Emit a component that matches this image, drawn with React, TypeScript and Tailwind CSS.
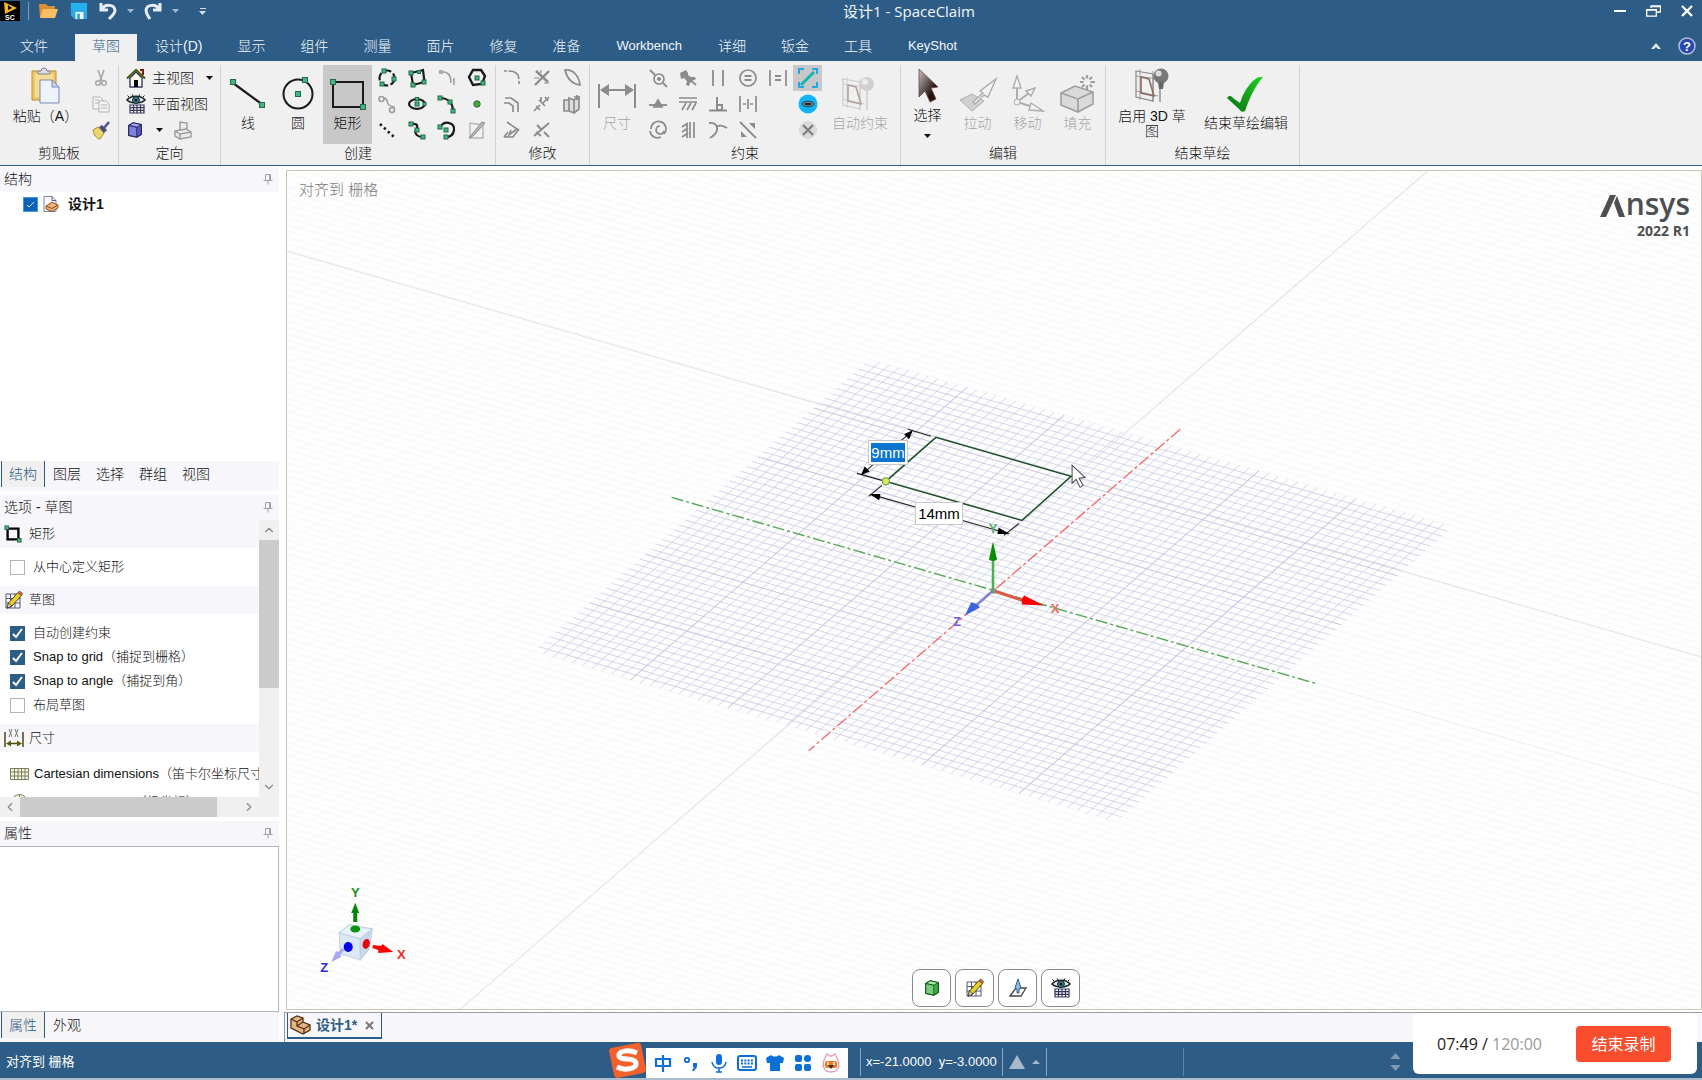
import type { ReactNode } from 'react';
import { ChevronDown, ChevronLeft, ChevronRight, ChevronUp } from 'lucide-react';

const GREY = '#8c8c8c';
const INK = '#1a1a1a';

function Ico({ children, size = 20, box = 20 }: { children: ReactNode; size?: number; box?: number }) {
  return (
    <svg width={size} height={size} viewBox={`0 0 ${box} ${box}`} fill="none" className="shrink-0" aria-hidden="true">
      {children}
    </svg>
  );
}

function Node({ x, y, s = 4 }: { x: number; y: number; s?: number }) {
  return <rect x={x - s / 2} y={y - s / 2} width={s} height={s} fill="#46b583" stroke="#1e6b47" strokeWidth="1" />;
}

function Caret({ className = '' }: { className?: string }) {
  return (
    <svg width="7" height="4" viewBox="0 0 7 4" className={className} aria-hidden="true">
      <path d="M0 0h7L3.5 4z" fill="currentColor" />
    </svg>
  );
}

function Pin() {
  return (
    <svg width="10" height="12" viewBox="0 0 10 12" fill="none" stroke="#a0a0a8" aria-hidden="true">
      <path d="M2.5 7V1.5h5V7M6.5 1.5V7M.5 7.5h9M5 8v3.5" />
    </svg>
  );
}

const cubeIcon = (light: string, mid: string, dark: string) => (
  <Ico size={18}>
    <path d="M3 5l5-3 9 2v11l-5 3-9-2z" fill={mid} stroke={dark} strokeWidth="1.4" strokeLinejoin="round" />
    <path d="M3 5l9 2 5-3-9-2z" fill={light} stroke={dark} strokeWidth="1" />
    <path d="M3 5l9 2v11l-9-2z" fill={light} fillOpacity=".55" stroke={dark} strokeWidth="1" />
  </Ico>
);

const eyeGrid = (
  <Ico size={20}>
    <path d="M1 6c4-5 14-5 18 0-4 4-14 4-18 0z" fill="#dfe8e8" stroke="#222" strokeWidth="1.6" />
    <circle cx="10" cy="6" r="3.4" fill="#3a7f8c" stroke="#123" />
    <circle cx="10" cy="6" r="1.3" fill="#000" />
    <path d="M3 3L1.5 1.5M7 2L6 .3M13 2l1-1.7M17 3l1.5-1.5" stroke="#222" />
    <path d="M4 11h14v8H4z" fill="#fff" stroke="#34345e" strokeWidth="1.2" />
    <path d="M4 13.7h14M4 16.3h14M7.5 11v8M11 11v8M14.5 11v8" stroke="#34345e" strokeWidth="1.2" />
  </Ico>
);

const pencilGrid = (
  <Ico size={20}>
    <path d="M2 4h14v14H2zM2 8.5h14M2 13h14M6.5 4v14M11 4v14" stroke="#55557c" />
    <path d="M3 18l1.5-5L14 2.5l3.5 3L8 16z" fill="#e6d02c" stroke="#55500c" />
    <path d="M14 2.5L15.5 1l3 2.5-1 2z" fill="#d9705e" stroke="#7c3a30" strokeWidth=".8" />
    <path d="M3 18l1.5-5L8 16z" fill="#f3dfae" stroke="#333" strokeWidth=".8" />
  </Ico>
);

const rectSmall = (
  <Ico size={18}>
    <path d="M4 4h12v12H4z" stroke="#000" strokeWidth="2.6" />
    <Node x={3} y={3} />
    <Node x={17} y={17} />
  </Ico>
);

const createIcons: [string, ReactNode][] = [
  ['三点圆', <><circle cx="10" cy="10" r="7.5" stroke={INK} strokeWidth="2.2" strokeDasharray="8 2.5" /><Node x={7} y={3} /><Node x={17} y={11} /><Node x={5} y={16} /></>],
  ['切线', <><circle cx="4.5" cy="5" r="2.5" stroke="#9a9a9a" strokeWidth="1.5" /><circle cx="15" cy="16" r="2.5" stroke="#9a9a9a" strokeWidth="1.5" /><path d="M7 4c5 1 2 5 5 7s5 1 5.5 3" stroke="#9a9a9a" strokeWidth="1.5" /></>],
  ['构造线', <path d="M3 4l14 13" stroke={INK} strokeWidth="2.6" strokeDasharray="2.4 3" />],
  ['三点矩形', <><path d="M4 5l12-3 1.5 12L6 17z" stroke={INK} strokeWidth="2.2" /><Node x={4} y={5} /><Node x={17} y={14} /><Node x={6} y={17} /><Node x={12} y={4} s={3} /></>],
  ['椭圆', <><ellipse cx="10" cy="10" rx="8" ry="4.8" stroke={INK} strokeWidth="2.2" /><Node x={10} y={10} /><Node x={10} y={5} s={3} /><Node x={17.5} y={10} s={3} /></>],
  ['样条曲线', <><path d="M4 4c5-1 7 1 6 4s-3 3-1 6 4 3 7 3" stroke={INK} strokeWidth="2.2" /><Node x={4} y={4} /><Node x={10} y={10} /><Node x={16} y={17} /></>],
  ['相切弧', <><path d="M3 4c8-1 11 3 11 11M17 10v7" stroke="#9a9a9a" strokeWidth="1.5" /><rect x="2" y="2" width="4" height="4" fill="#aaa" /></>],
  ['扫掠弧', <><path d="M3 4c8 0 13 5 13 13" stroke={INK} strokeWidth="2.2" /><Node x={3} y={4} /><Node x={13} y={8} /><Node x={16} y={17} /></>],
  ['三点弧', <><path d="M4 6c4-6 14-3 13 4-.5 4-3 7-8 7" stroke={INK} strokeWidth="2.2" /><Node x={3} y={7} /><Node x={9} y={10} /><Node x={9} y={17} /></>],
  ['多边形', <><path d="M6 2h8l4 6-3 8-9 1-4-8z" stroke={INK} strokeWidth="2.4" /><Node x={10} y={10} /><Node x={16} y={15} /></>],
  ['点', <circle cx="10" cy="10" r="3.2" fill="#45a945" stroke="#256d25" />],
  ['面曲线', <><path d="M3 3v15h13V5z" stroke="#b5b5b5" strokeWidth="1.4" /><path d="M2 18L15 2l3 1L6 16z" fill="#b8b8b8" stroke="#8c8c8c" /></>],
];

const modifyIcons: [string, ReactNode][] = [
  ['创建圆角', <path d="M2 3h5c7 0 10 3 10 9v5" strokeDasharray="3 1.5 15 2" />],
  ['偏移曲线', <path d="M3 4h6l7 5v9M2 9h5l4 3v6" />],
  ['投影到草图', <path d="M2 17h9l6-8M2 17l4-5M5 2l10 7-8 6 2-5" />],
  ['剪裁', <><path d="M4 3l12 11M17 3L3 17" strokeWidth="2.4" /><path d="M2 10h5M9 2v3M12 15h5" strokeWidth="1.2" /></>],
  ['拆分曲线', <path d="M2 17l6-6M11 9l6-6M7 6l6 6M4 12l4 4M13 3l3 4M9 3v4" />],
  ['创建角', <path d="M2 16L17 3M5 5l5 5M12 12l5 5M4 12l5 4" strokeWidth="2" />],
  ['弯曲', <path d="M3 2c8-1 14 6 15 15C10 16 5 10 3 2z" />],
  ['缩放', <path d="M2 6h5v11H2zM7 4l5 2v13l-5-2zM12 6l5-3v12l-5 4M15 1v5M12 3h6" fill="#ddd" />],
];

const constraintIcons: [string, ReactNode][] = [
  ['检查', <><circle cx="11" cy="11" r="5" /><path d="M15 15l4 4M9 11h4M11 9v4M2 2l5 5" strokeWidth="1.9" /></>],
  ['中点', <><path d="M1 11h18" strokeWidth="1.9" /><path d="M10 6l4 7H6z" fill={GREY} /></>],
  ['同心', <path d="M3 9a7.5 7.5 0 1113 5M12 6a4 4 0 104 5M2 11c1 6 6 8 11 6" />],
  ['固定', <><path d="M2 5l6-3 2 3v2l3 2h4l1 2-4 2-2 2-1 3-3-1 1-4-3-3-3 1z" fill={GREY} stroke="none" /><path d="M11 11l7 6" strokeWidth="2" /></>],
  ['水平', <path d="M1 4h18M1 8h18M4 16l4-7M9 16l4-7M14 16l4-7" />],
  ['竖直', <path d="M12 2v16M16 2v16M4 7l6-4M4 12l6-4M4 17l6-4M9 3v15" />],
  ['平行', <path d="M5 2v16M15 2v16" strokeWidth="1.8" />],
  ['垂直', <><path d="M1 16.5h18" strokeWidth="2" /><path d="M9 3v13h5v-5H9z" strokeWidth="2" /></>],
  ['相切', <path d="M1 3c6-1 9 3 8 7-1 5-4 6-7 8M8 7c4-2 6-2 11 1" strokeWidth="1.8" />],
  ['等半径', <><circle cx="10" cy="10" r="8" /><path d="M6.5 8h7M6.5 12h7" strokeWidth="2" /></>],
  ['等距', <path d="M2 2v16M18 2v16M10 5v10M5 10h3M12 10h3" />],
  ['对称', <><path d="M2 2l16 16" strokeWidth="1.8" /><path d="M11 3h6v6zM3 11v6h6z" fill={GREY} stroke="none" /></>],
  ['等长', <><path d="M2 2v16M18 2v16" /><path d="M7 8h6M7 12h6" strokeWidth="2" /></>],
];

function IconGrid({ items, stroke }: { items: [string, ReactNode][]; stroke?: string }) {
  return (
    <div className="grid auto-cols-[30px] grid-flow-col grid-rows-[repeat(3,26px)]">
      {items.map(([name, art]) => (
        <button key={name} aria-label={name} className="flex items-center justify-center">
          <Ico><g stroke={stroke} strokeWidth={stroke ? 1.7 : undefined}>{art}</g></Ico>
        </button>
      ))}
    </div>
  );
}

function Group({ title, className, children }: { title: string; className: string; children: ReactNode }) {
  return (
    <section aria-label={title} className={`flex shrink-0 flex-col border-r border-[#d2d2d2] ${className}`}>
      <div className="flex h-[79px] justify-center pr-px">{children}</div>
      <div className="text-center leading-[18px]">{title}</div>
    </section>
  );
}

// large ribbon button: icon on top, caption below
function Big({ label, icon, className = '', disabled = false }: { label: string; icon: ReactNode; className?: string; disabled?: boolean }) {
  return (
    <button className={`flex shrink-0 flex-col items-center whitespace-nowrap pt-2 leading-4 ${disabled ? 'text-[#a6a6a6]' : ''} ${className}`}>
      <span className="flex h-[42px] items-center">{icon}</span>
      {label}
    </button>
  );
}

const tabs = ['设计(D)', '显示', '组件', '测量', '面片', '修复', '准备', 'Workbench', '详细', '钣金', '工具', 'KeyShot'];

function TitleBar() {
  return (
    <header className="bg-[#2d5c87] text-[#f2f6fa]">
      <div className="flex h-[22px] items-center">
        <div className="flex w-[208px] shrink-0 items-center">
          <svg width="20" height="20" viewBox="0 0 20 20" aria-hidden="true">
            <path d="M0 0h20v20H0z" fill="#000" />
            <path d="M4 1l13 6-12 6z" fill="#f4b323" />
            <path d="M8 4l4 3-4 2z" fill="#000" />
            <text x="5" y="19" fontSize="7" fontWeight="700" fill="#fff">SC</text>
          </svg>
          <span className="mx-2 h-[18px] w-px bg-[#7f9dba]" />
          <button aria-label="打开" className="ml-px">
            <Ico size={20}>
              <path d="M1 3h7l2 2h7v12H2z" fill="#d98f35" />
              <path d="M5 8h15l-3 9H2z" fill="#fbbd62" />
            </Ico>
          </button>
          <button aria-label="保存" className="ml-3">
            <Ico size={18}>
              <path d="M1 1h18v18H5l-4-4z" fill="#2da5e6" />
              <path d="M1 1h18v8H1z" fill="#25b0ee" />
              <path d="M6 11h9v8H6z" fill="#e8f6fd" />
              <path d="M8 13h3v6H8z" fill="#2da5e6" />
            </Ico>
          </button>
          <button aria-label="撤消" className="ml-[10px]">
            <Ico size={20}><path d="M3 2v7h7M4 8c3-5 12-5 13 1 0 4-3 6-6 9" stroke="#e6edf4" strokeWidth="3" /></Ico>
          </button>
          <Caret className="ml-[9px] text-[#a3b8cc]" />
          <button aria-label="恢复" className="ml-[9px]">
            <Ico size={20}><path d="M17 2v7h-7M16 8C13 3 4 3 3 9c0 4 2 6 4 9" stroke="#e6edf4" strokeWidth="3" /></Ico>
          </button>
          <Caret className="ml-[9px] text-[#a3b8cc]" />
          <span className="ml-5 flex flex-col items-center gap-[2px] text-[#d5e0ea]">
            <span className="h-px w-[6px] bg-current" />
            <Caret />
          </span>
        </div>
        <h1 className="flex-1 text-center font-['Open_Sans','Noto_Sans_CJK_SC',sans-serif] text-[15px] font-normal leading-[22px]">设计1 - SpaceClaim</h1>
        <div className="flex w-[92px] shrink-0 items-center justify-between pl-1 pr-[9px]">
          <button aria-label="最小化">
            <svg width="12" height="12" viewBox="0 0 12 12"><path d="M0 6h12" stroke="#fff" strokeWidth="2" /></svg>
          </button>
          <button aria-label="还原">
            <svg width="15" height="12" viewBox="0 0 15 12" fill="none" stroke="#fff">
              <path d="M5 3V1h9.5v6H11M4.5 1.5h10" strokeWidth="1.3" />
              <path d="M.7 4.7h9.6v6.5H.7zM.7 5.2h9.6" strokeWidth="1.3" />
            </svg>
          </button>
          <button aria-label="关闭">
            <svg width="12" height="12" viewBox="0 0 12 12"><path d="M1 1l10 10M11 1L1 11" stroke="#fff" strokeWidth="2.4" /></svg>
          </button>
        </div>
      </div>
      <nav className="mt-3 flex h-[27px] items-stretch gap-px pl-[3px]">
        <button className="mr-[9px] px-[17px] pb-1 text-sm leading-5">文件</button>
        <button className="bg-[#f0f0f0] px-[17px] pb-1 text-sm leading-5 text-[#2d5c87]">草图</button>
        {tabs.map(t => (
          <button key={t} className={`pb-1 leading-5 ${/^[A-Z]/.test(t) ? 'px-[18px] pt-px text-[13px]' : 'px-[17px] text-sm'}`}>{t}</button>
        ))}
        <div className="ml-auto flex items-center gap-[17px] pb-1 pr-[6px]">
          <button aria-label="折叠功能区">
            <svg width="10" height="6" viewBox="0 0 10 6"><path d="M5 0l5 6H7L5 4 3 6H0z" fill="#e6edf4" /></svg>
          </button>
          <button aria-label="帮助">
            <svg width="18" height="18" viewBox="0 0 18 18">
              <circle cx="9" cy="9" r="8" fill="#2b49b4" stroke="#b5bfd8" strokeWidth="1.5" />
              <text x="9" y="14" fontSize="13" fontWeight="700" fill="#fff" textAnchor="middle">?</text>
            </svg>
          </button>
        </div>
      </nav>
    </header>
  );
}

const lampArt = (
  <>
    <path d="M3 5l17 3v27L3 31z" stroke="currentColor" strokeWidth="1.2" />
    <path d="M3 10l22 3M3 25l22 5M7 3v31M20 5v31" stroke="currentColor" strokeWidth=".8" />
    <path d="M8 11l8 2 5 17-13-3z" stroke="#8a6f63" strokeWidth="1.6" />
    <path d="M27 16v20" stroke="currentColor" strokeWidth="1.4" />
  </>
);

function Ribbon() {
  return (
    <div className="flex h-[105px] items-stretch overflow-hidden border-b border-[#2d5c87] bg-[#f0f0f0] pt-1 text-sm">
      <Group title="剪贴板" className="w-[119px]">
        <button className="flex w-[90px] flex-col items-center whitespace-nowrap pt-px leading-5">
          <svg width="32" height="40" viewBox="0 0 32 40" aria-hidden="true">
            <path d="M2 5h24v29H2z" fill="#eec868" stroke="#b98c34" />
            <path d="M5 8h18v23H5z" fill="#f7dc94" />
            <path d="M8 8V5h3a3 3 0 016 0h3v3z" fill="#dadde2" stroke="#7e8590" />
            <path d="M10 14h12l7 7v16H10z" fill="#eef2fb" stroke="#7889b5" />
            <path d="M22 14v7h7z" fill="#c9d4ee" stroke="#7889b5" />
          </svg>
          粘贴（A）
        </button>
        <div className="mr-[6px] grid grid-rows-[repeat(3,26px)]">
          <button aria-label="剪切"><Ico><path d="M7 2l4 11M13 2L9 13" stroke="#a9a9a9" strokeWidth="1.6" /><circle cx="7" cy="15" r="2.3" stroke="#a9a9a9" strokeWidth="1.5" /><circle cx="13" cy="15" r="2.3" stroke="#a9a9a9" strokeWidth="1.5" /></Ico></button>
          <button aria-label="复制"><Ico><path d="M2 3h7l3 3v9H2z" fill="#f4f4f4" stroke="#b3b3b3" /><path d="M8 7h7l3 3v8H8zM10 11h6M10 14h6M4 6h4M4 9h4" fill="#f4f4f4" stroke="#b3b3b3" /></Ico></button>
          <button aria-label="格式刷"><Ico><path d="M2 10l5-3 6 6-4 6c-3 0-6-4-7-9z" fill="#ecd674" stroke="#a98d2a" /><path d="M8 7l3-2 5 5-3 3z" fill="#4b4b78" /><path d="M13 8l5-6" stroke="#55559a" strokeWidth="2.6" /></Ico></button>
        </div>
      </Group>

      <Group title="定向" className="w-[102px]">
        <div className="grid w-full grid-rows-[repeat(3,26px)] pl-[7px]">
          <button className="flex items-center gap-[6px] pb-px leading-5">
            <Ico size={20}>
              <path d="M4 10v9h12v-9l-6-6z" fill="#fdfae8" stroke="#36366e" strokeWidth="1.4" />
              <path d="M1 10.5L10 2l9 8.5" stroke="#4c5a10" strokeWidth="2.2" />
              <path d="M14 2h3v5" stroke="#7d1d12" strokeWidth="2" />
              <path d="M8 12h4v7H8z" fill="#000" />
            </Ico>
            主视图
            <Caret className="ml-[6px]" />
          </button>
          <button className="flex items-center gap-[6px] pb-px leading-5">{eyeGrid}平面视图</button>
          <div className="flex items-center">
            <button aria-label="旋转视图" className="flex items-center gap-3">{cubeIcon('#a4a4f0', '#5a5ac4', '#23235f')}<Caret /></button>
            <button aria-label="打印视图" className="ml-[10px]">
              <Ico><path d="M7 10V2l7 1v6M2 11l11-2 5 3v5l-11 2-5-3zM2 11l5 3 11-2M7 14v5" stroke="#9c9c9c" strokeWidth="1.4" fill="#ececec" /></Ico>
            </button>
          </div>
        </div>
      </Group>

      <Group title="创建" className="w-[275px]">
        <Big label="线" className="w-[50px]" icon={
          <Ico size={40} box={40}><path d="M5 9l30 22" stroke={INK} strokeWidth="2.2" /><Node x={5} y={8} s={5} /><Node x={34} y={31} s={5} /></Ico>} />
        <Big label="圆" className="w-[50px]" icon={
          <Ico size={36} box={36}><circle cx="18" cy="18" r="14.5" stroke={INK} strokeWidth="2" /><Node x={18} y={18} s={5} /><Node x={25} y={4} s={5} /></Ico>} />
        <Big label="矩形" className="w-[49px] bg-[#c8c8c8]" icon={
          <Ico size={40} box={40}><path d="M5 8h30v25H5z" stroke={INK} strokeWidth="2" /><Node x={5} y={8} s={5} /><Node x={35} y={33} s={5} /></Ico>} />
        <IconGrid items={createIcons} />
      </Group>

      <Group title="修改" className="w-[94px]">
        <IconGrid items={modifyIcons} stroke="#8c8c8c" />
      </Group>

      <Group title="约束" className="w-[311px]">
        <Big disabled label="尺寸" className="w-[52px]" icon={
          <Ico size={40} box={40}><path d="M2 10v24M38 10v24M6 16h28" stroke={GREY} strokeWidth="2" /><path d="M3 16l9-6v12zM37 16l-9-6v12z" fill={GREY} /></Ico>} />
        <IconGrid items={constraintIcons} stroke="#8c8c8c" />
        <div className="grid grid-rows-[repeat(3,26px)] justify-items-center">
          <button aria-label="草图约束" className="flex w-[29px] items-center justify-center bg-[#c8c8c8]">
            <Ico size={22} box={22}><path d="M2 7V2h5M15 2h5v5M20 15v5h-5M7 20H2v-5" stroke="#1fa9e0" strokeWidth="2" /><path d="M4 18L17 5" stroke="#11b6b2" strokeWidth="3" /></Ico>
          </button>
          <button aria-label="显示约束"><Ico><circle cx="10" cy="10" r="9.5" fill="#12b5f5" /><ellipse cx="10" cy="10" rx="6" ry="2.8" fill="#5f7c89" stroke="#2c4957" /><path d="M7 10h6" stroke="#1f2d33" strokeWidth="2" /></Ico></button>
          <button aria-label="删除约束"><Ico><circle cx="10" cy="10" r="9" fill="#d9d9d9" /><path d="M5 5l10 10M15 5L5 15" stroke="#7d7d7d" strokeWidth="2.2" /></Ico></button>
        </div>
        <Big disabled label="自动约束" className="w-[76px]" icon={
          <Ico size={40} box={40}><g className="text-[#b4b4b4]" opacity=".6">{lampArt}</g><circle cx="27" cy="10" r="7" fill="#d0d0d0" /><circle cx="25" cy="8" r="3" fill="#ececec" /></Ico>} />
      </Group>

      <Group title="编辑" className="w-[205px]">
        <button className="flex w-[50px] flex-col items-center leading-5">
          <svg width="26" height="40" viewBox="0 0 26 40" aria-hidden="true">
            <defs>
              <linearGradient id="arrow" x1="0" y1="0" x2="1" y2="1"><stop offset="0" stopColor="#c9c4c2" /><stop offset=".7" stopColor="#231410" /></linearGradient>
            </defs>
            <path d="M4 4l19 18-7 1 5 11-6 3-5-11-6 6z" fill="url(#arrow)" stroke="#6b4a3c" strokeWidth=".8" />
          </svg>
          选择
          <Caret className="mt-[9px]" />
        </button>
        <Big disabled label="拉动" className="w-[50px]" icon={
          <Ico size={40} box={40}><path d="M2 26l12-6 12 7-12 10z" fill="#d0d0d0" stroke="#adadad" /><path d="M17 30l9-9 4 2L38 5 22 17l3 2-10 9z" fill="#f3f3f3" stroke="#adadad" strokeWidth="1.4" /></Ico>} />
        <Big disabled label="移动" className="w-[50px]" icon={
          <Ico size={40} box={40}><path d="M9 28V12M9 28l12-9M9 28l16 5" stroke="#adadad" strokeWidth="2" /><path d="M5 14L9 2l4 12zM18 17l9-3-4 8zM23 29l12 8-14-1z" fill="#f3f3f3" stroke="#adadad" strokeWidth="1.4" /><circle cx="9" cy="28" r="3" fill="#eee" stroke="#adadad" /></Ico>} />
        <Big disabled label="填充" className="w-[50px]" icon={
          <Ico size={40} box={40}><path d="M3 19l14-7 18 6v12l-15 8-17-7z" fill="#dadada" stroke="#9e9e9e" strokeWidth="1.6" /><path d="M3 19l17 6 15-7M20 25v13" stroke="#9e9e9e" strokeWidth="1.6" /><path d="M29 1v15M22 8h15M24 3l10 10M34 3L24 13" stroke="#9e9e9e" strokeWidth="2.2" /><circle cx="29" cy="8" r="3.5" fill="#f0f0f0" /></Ico>} />
      </Group>

      <Group title="结束草绘" className="w-[194px]">
        <button className="flex w-[88px] flex-col items-center px-2 leading-[15px]">
          <span className="mb-1 flex h-[40px] items-center text-[#8a8a8a]">
            <Ico size={38} box={38}>
              {lampArt}
              <circle cx="28" cy="10" r="7.5" fill="#777" />
              <circle cx="25.5" cy="7.5" r="3" fill="#ddd" />
              <path d="M25 16h6l-1 7h-4z" fill="#666" />
            </Ico>
          </span>
          启用 3D 草图
        </button>
        <Big label="结束草绘编辑" className="w-[100px]" icon={
          <Ico size={40} box={40}>
            <defs>
              <linearGradient id="tick" x1="0" y1="1" x2="1" y2="0"><stop offset="0" stopColor="#0b6e18" /><stop offset="1" stopColor="#1fd31f" /></linearGradient>
            </defs>
            <path d="M1 24c2-3 5-2 6 0l7 5C18 17 25 6 33 3h4C29 12 23 25 19 37c-2 1-4 1-5-1z" fill="url(#tick)" />
          </Ico>} />
      </Group>
    </div>
  );
}

function PanelHead({ title }: { title: string }) {
  return (
    <div className="flex h-[25px] shrink-0 items-center justify-between bg-[#f7f7fb] pb-[2px] pl-1 pr-[6px] text-sm leading-5">
      <h2>{title}</h2>
      <button aria-label={`固定${title}`}><Pin /></button>
    </div>
  );
}

function PanelTabs({ items }: { items: string[] }) {
  return (
    <div className="flex h-[30px] shrink-0 items-start bg-[#f7f7fb] pl-px text-sm">
      {items.map((t, i) => (
        <button key={t} className={`h-[26px] pb-px ${i === 0 ? 'border-x border-[#2d5c87] bg-[#f0f0f0] px-[7px] text-[#2d5c87]' : 'pl-2 pr-[7px]'}`}>{t}</button>
      ))}
    </div>
  );
}

function OptionHead({ icon, title }: { icon: ReactNode; title: string }) {
  return (
    <h3 className="flex h-7 shrink-0 items-center bg-[#f7f7fb] pl-1">
      <span className="flex w-[25px]">{icon}</span>
      {title}
    </h3>
  );
}

function Check({ label, checked = false }: { label: string; checked?: boolean }) {
  return (
    <label className="flex h-6 items-center gap-2 pl-[10px] whitespace-nowrap">
      <span className="relative flex">
        <input type="checkbox" defaultChecked={checked} className="peer h-[15px] w-[15px] appearance-none border border-[#b4b4b4] bg-white checked:border-[#2d5c87] checked:bg-[#2d5c87]" />
        <svg width="15" height="15" viewBox="0 0 15 15" fill="none" className="pointer-events-none absolute inset-0 hidden peer-checked:block">
          <path d="M3 8l3 3 6-8" stroke="#fff" strokeWidth="2" />
        </svg>
      </span>
      {label}
    </label>
  );
}

function Sidebar() {
  return (
    <aside className="flex w-[279px] shrink-0 flex-col pt-px">
      <PanelHead title="结构" />
      <div className="min-h-[120px] flex-1">
        <label className="flex h-6 items-center pl-[23px] text-sm font-bold">
          <span className="relative flex">
            <input type="checkbox" defaultChecked className="h-[15px] w-[15px] appearance-none border border-[#4c97d8] bg-[#0a63b8]" />
            <svg width="15" height="15" viewBox="0 0 15 15" fill="none" className="pointer-events-none absolute inset-0"><path d="M4 8l2 2 5-5" stroke="#d6e8f8" /></svg>
          </span>
          <span className="ml-[5px] mr-[9px]">
            <Ico size={16} box={16}>
              <path d="M1 .5h8l4 4v11H1z" fill="#fff" stroke="#7684a6" />
              <path d="M9 .5v4h4" stroke="#4c5f94" />
              <path d="M3 10l6-4 6 3v3l-6 3.5-6-2.5z" fill="#e9b27c" stroke="#8d5527" />
              <path d="M3 10l6 2.5L15 9" stroke="#8d5527" />
            </Ico>
          </span>
          设计1
        </label>
      </div>
      <PanelTabs items={['结构', '图层', '选择', '群组', '视图']} />

      <div className="mt-1 flex flex-col">
        <PanelHead title="选项 - 草图" />
        <div className="flex text-[13px]">
          <div className="flex h-[277px] min-w-0 flex-1 flex-col overflow-hidden">
            <OptionHead icon={rectSmall} title="矩形" />
            <div className="flex h-[38px] shrink-0 flex-col justify-center"><Check label="从中心定义矩形" /></div>
            <OptionHead icon={pencilGrid} title="草图" />
            <div className="shrink-0 py-[7px]">
              <Check checked label="自动创建约束" />
              <Check checked label="Snap to grid（捕捉到栅格）" />
              <Check checked label="Snap to angle（捕捉到角）" />
              <Check label="布局草图" />
            </div>
            <OptionHead title="尺寸" icon={
              <Ico size={20}>
                <path d="M1 4v15M19 4v15M4 15.5h12" stroke="#4a4a10" strokeWidth="1.5" />
                <path d="M2 15.5l5-3v6zM18 15.5l-5-3v6z" fill="#5c5c12" />
                <path d="M5 1l3 8M8 1L5 9M11 1l3 8M14 1l-3 8" stroke="#777" />
              </Ico>} />
            <button className="mt-2 flex h-[28px] shrink-0 items-center gap-[5px] whitespace-nowrap pl-[10px]">
              <svg width="19" height="12" viewBox="0 0 19 12" className="shrink-0" aria-hidden="true">
                <path d="M.5.5h18v11H.5zM.5 4h18M.5 8h18M4.5.5v11M8 .5v11M11.5.5v11M15 .5v11" fill="#f5f5e2" stroke="#7c7c5e" />
              </svg>
              Cartesian dimensions（笛卡尔坐标尺寸）
            </button>
            <button className="flex h-[28px] shrink-0 items-center gap-[5px] whitespace-nowrap pl-[10px]">
              <svg width="19" height="19" viewBox="0 0 19 19" className="shrink-0" aria-hidden="true">
                <circle cx="9.5" cy="9.5" r="8" fill="#f5f5e2" stroke="#7c7c5e" />
                <path d="M9.5 2v15M2 9.5h15" stroke="#7c7c5e" />
              </svg>
              Polar dimensions（极坐标）
            </button>
          </div>
          <div className="flex w-5 shrink-0 flex-col items-center bg-[#f0f0f0] text-[#888]">
            <button aria-label="向上滚动" className="flex h-5 items-center"><ChevronUp size={14} /></button>
            <div className="h-[148px] w-full bg-[#cbcbcb]" />
            <button aria-label="向下滚动" className="mt-auto flex h-5 items-center"><ChevronDown size={14} /></button>
          </div>
        </div>
        <div className="flex h-5 items-center bg-[#f0f0f0] pr-5 text-[#888]">
          <button aria-label="向左滚动" className="flex w-5 justify-center"><ChevronLeft size={14} /></button>
          <div className="h-full w-[197px] bg-[#cbcbcb]" />
          <button aria-label="向右滚动" className="ml-auto flex w-5 justify-center"><ChevronRight size={14} /></button>
        </div>
      </div>

      <div className="mt-1 flex flex-col">
        <PanelHead title="属性" />
        <div className="h-[166px] border-y border-r border-[#b5b5bd]" />
        <PanelTabs items={['属性', '外观']} />
      </div>
    </aside>
  );
}

// corners of the 60mm sketch grid, projected
const TL = [870, 359];
const TR = [1453, 526];
const BR = [1116, 821];
const BL = [534, 651];

function project(u: number, v: number) {
  const s = (u + 30) / 60;
  const t = (v + 30) / 60;
  const at = (k: number) => (1 - t) * ((1 - s) * BL[k] + s * BR[k]) + t * ((1 - s) * TL[k] + s * TR[k]);
  return `${at(0).toFixed(1)} ${at(1).toFixed(1)}`;
}

function gridPath(limit: number, extent: number, keep: (i: number) => boolean, axis: 'u' | 'v') {
  const out: string[] = [];
  for (let i = -limit; i <= limit; i++) {
    if (!keep(i)) continue;
    out.push(axis === 'u'
      ? `M${project(-extent, i)}L${project(extent, i)}`
      : `M${project(i, -extent)}L${project(i, extent)}`);
  }
  return out.join('');
}

const minorU = gridPath(29, 30, i => i % 10 !== 0, 'u');
const minorV = gridPath(29, 30, i => i % 10 !== 0, 'v');
const majorU = gridPath(29, 30, i => i % 10 === 0 && i !== 0, 'u');
const majorV = gridPath(29, 30, i => i % 10 === 0 && i !== 0, 'v');
const farU = gridPath(140, 150, () => true, 'u');
const farV = gridPath(140, 150, i => i % 2 === 0, 'v');

function Scene() {
  return (
    <svg viewBox="287 171 1414 837" preserveAspectRatio="xMidYMid slice" fill="none" className="absolute inset-0 h-full w-full">
      <path d={farU} stroke="#f7f7f7" />
      <path d={farV} stroke="#fbfbfb" />
      <path d="M287 251L1702 657M1427 171L460 1009" stroke="#e2e2e6" />
      <path d="M1316 683L1702 794" stroke="#f0f0f0" />
      <path d={minorU} stroke="#c3c3e2" strokeOpacity=".6" />
      <path d={minorV} stroke="#c6c6dc" strokeOpacity=".52" />
      <path d={majorU} stroke="#bfbfe0" strokeOpacity=".85" />
      <path d={majorV} stroke="#bfbfe0" strokeOpacity=".85" />
      <path d="M672 497L1316 683" stroke="#56a856" strokeWidth="1.4" strokeDasharray="12 3 3 3" />
      <path d="M1180 429L809 750" stroke="#f56b6b" strokeWidth="1.4" strokeDasharray="12 3 3 3" />

      {/* sketched rectangle */}
      <path d="M886 481L936 437 1071 476 1022 520z" stroke="#1d4f27" strokeWidth="1.5" />
      <path d="M908 429l23 7M912 431l-50 43M857 473l25 7M882 485l-13 11M871 494l137 39M1019 523l-15 12" stroke="#222" strokeWidth="1.1" />
      <path d="M912 431l-7 3 4 4zM862 474l7-3-4-4zM871 494l8 5 1-5zM1008 533l-9-5-1 5z" fill="#000" stroke="#000" />
      <circle cx="886" cy="481" r="3.5" fill="#d8e96a" stroke="#6f9a43" />

      {/* origin triad */}
      <path d="M993 590V560" stroke="#4fae4f" strokeWidth="2.5" />
      <path d="M993 541l4 18q-4 3-8 0z" fill="#078a07" />
      <path d="M993 590l30 10" stroke="#dd5848" strokeWidth="3" />
      <path d="M1024 595l20 10-22-1q-1-5 2-9z" fill="#fb0000" />
      <path d="M993 590l-17 15" stroke="#8585d8" strokeWidth="2.5" />
      <path d="M965 615l6-13q5 0 9 5z" fill="#3f63e0" />
      <rect x="991" y="588" width="5" height="5" fill="#7d8f7d" />
      <g fontSize="13" fontWeight="700" textAnchor="middle">
        <text x="993" y="533" fill="#5fae6a">Y</text>
        <text x="1055" y="612" fill="#e8675f">X</text>
        <text x="957" y="625" fill="#6d5fe8">Z</text>
      </g>

      {/* view cube */}
      <path d="M340 932l10-8 23 4-12 10z" fill="#e9f3fc" stroke="#c2cfdd" />
      <path d="M340 932l21 6v21l-20-6z" fill="#dbe8f6" stroke="#c2cfdd" />
      <path d="M373 928l-3 20-9 11v-21z" fill="#c8d9ec" stroke="#c2cfdd" />
      <path d="M354 921v-9h-2l4-10 4 10h-2v9z" fill="#088208" />
      <ellipse cx="356" cy="928" rx="5" ry="3.5" fill="#0a920a" />
      <ellipse cx="349" cy="946" rx="4.5" ry="5" fill="#0000f0" />
      <ellipse cx="367" cy="943" rx="3.5" ry="5" fill="#f00000" transform="rotate(15 367 943)" />
      <path d="M374 944l8 1 1-2 11 8-15 1v-3l-6-2z" fill="#fb0000" />
      <path d="M345 949l-4 5 1 2-10 5 5-11 2 1 4-4z" fill="#a7a5f6" />
      <g fontSize="13" fontWeight="700" textAnchor="middle">
        <text x="356" y="896" fill="#1c8f1c">Y</text>
        <text x="402" y="958" fill="#f02a2a">X</text>
        <text x="325" y="971" fill="#2b2be6">Z</text>
      </g>

      <path d="M1072 465v18l4-4 4 8 3-2-4-7 6-1z" fill="#fff" stroke="#444" />
    </svg>
  );
}

function Logo() {
  return (
    <div aria-label="Ansys 2022 R1" className="absolute right-[11px] top-[14px] flex flex-col items-end font-['Open_Sans',sans-serif] text-[#4d4f52]">
      <div className="flex items-end text-3xl font-semibold leading-[38px]">
        <svg width="26" height="22" viewBox="0 0 26 22" className="mb-[6px]" aria-hidden="true">
          <path d="M10 0h6L6 22H0z" fill="#4d4f52" />
          <path d="M17 1l8 21h-6L14 8z" fill="#4d4f52" />
        </svg>
        nsys
      </div>
      <div className="text-sm font-bold leading-4">2022 R1</div>
    </div>
  );
}

const viewTools: [string, ReactNode][] = [
  ['三维模式', cubeIcon('#a6e8a2', '#3fae45', '#14581b')],
  ['草图模式', pencilGrid],
  ['剖面模式', <Ico size={20}><path d="M2 18l6-8h10l-5 8z" stroke="#444" strokeWidth="1.3" /><path d="M10 1l3 9-2 1v4H9v-4l-2-1z" fill="#8cc0e6" stroke="#2d5f86" /></Ico>],
  ['平面视图', eyeGrid],
];

function Viewport() {
  return (
    <main className="ml-[5px] flex min-w-0 flex-1 flex-col pt-1">
      <div className="relative ml-[2px] flex-1 overflow-hidden border border-[#cbc7b8] bg-[#fefefe]">
        <Scene />
        <p className="absolute left-3 top-[9px] text-[15px] leading-5 text-[#7c7c7c]">对齐到 栅格</p>
        <Logo />
        <input aria-label="宽度" defaultValue="9mm" className="absolute left-[582px] top-[270px] h-[23px] w-[38px] border-2 border-white bg-[#0b74d1] text-center text-[15px] font-normal leading-5 text-white outline outline-[#c8c8c8]" />
        <input aria-label="长度" defaultValue="14mm" className="absolute left-[628px] top-[331px] h-[23px] w-[48px] border border-[#c8c8c8] bg-white text-center text-[15px] font-normal leading-5 text-black" />
        <div className="absolute inset-x-0 bottom-[2px] flex justify-center gap-1 pl-1">
          {viewTools.map(([name, icon]) => (
            <button key={name} aria-label={name} className="flex h-[38px] w-[39px] items-center justify-center rounded-lg border border-[#8a8a8a] bg-white">{icon}</button>
          ))}
        </div>
      </div>
      <div className="mt-[2px] flex h-[30px] shrink-0 items-start border-l border-t border-[#9a9aa2] bg-[#f7f7fb] pl-[2px]">
        <div className="flex h-[26px] items-center border-x border-b-2 border-[#2d5c87] bg-[#f7f7fb] pl-[2px] pr-[7px] text-sm font-bold text-[#2d5c87]">
          <svg width="22" height="20" viewBox="0 0 22 20" className="mr-1" aria-hidden="true">
            <path d="M1 4l6-3 6 2v4l7 3v5l-7 4L1 13z" fill="#e6b483" stroke="#54321a" strokeWidth="1.3" />
            <path d="M1 4l6 3v4l7 3v5M7 7l6-4M7 11l6-4M14 14l6-4" stroke="#54321a" strokeWidth="1.3" fill="none" />
          </svg>
          设计1*
          <button aria-label="关闭设计1" className="ml-2">
            <svg width="9" height="9" viewBox="0 0 9 9"><path d="M1 1l7 7M8 1L1 8" stroke="#777" strokeWidth="2" /></svg>
          </button>
        </div>
      </div>
    </main>
  );
}

function ImeBar() {
  return (
    <div className="absolute bottom-0 left-[608px] flex items-center">
      <svg width="38" height="36" viewBox="0 0 38 36" className="z-10" aria-hidden="true">
        <path d="M3 6L29 1q3-1 4 2l5 24q0 3-3 4L10 36q-3 0-4-3L1 9q0-2 2-3z" fill="#f4612a" />
        <path d="M29 11C20 7 10 9 11 14s16 1 17 7-12 8-19 4" stroke="#fff" strokeWidth="5" fill="none" />
      </svg>
      <div className="mt-[6px] flex h-[30px] items-center gap-[8px] bg-white pl-[7px] pr-[7px]">
        <Ico><path d="M3 6h14v7H3zM10 2v17" stroke="#0b6fd8" strokeWidth="2.2" /></Ico>
        <Ico><circle cx="6" cy="7" r="2.2" stroke="#0b6fd8" strokeWidth="1.8" /><path d="M12 10h4v4l-3 4h-2l2-4h-1z" fill="#0b6fd8" /></Ico>
        <Ico><rect x="7" y="1" width="6" height="11" rx="3" fill="#0b6fd8" /><path d="M3 9c1 8 13 8 14 0M10 15v4M7 19h6" stroke="#0b6fd8" strokeWidth="1.6" /></Ico>
        <Ico><rect x="1" y="3" width="18" height="14" rx="2" stroke="#0b6fd8" strokeWidth="2" /><path d="M4 7.5h12M4 10.5h12" stroke="#0b6fd8" strokeWidth="1.8" strokeDasharray="2 1.3" /><path d="M5 14h10" stroke="#0b6fd8" strokeWidth="1.6" /></Ico>
        <Ico><path d="M6 2c2 2 6 2 8 0l5 3-1 5h-3v8H5v-8H2L1 5z" fill="#0b6fd8" /></Ico>
        <Ico><rect x="2" y="2" width="7" height="7" rx="2" fill="#0b6fd8" /><rect x="11" y="2" width="7" height="7" rx="3.5" fill="#0b6fd8" /><rect x="2" y="11" width="7" height="7" rx="2" fill="#0b6fd8" /><rect x="11" y="11" width="7" height="7" rx="2" fill="#0b6fd8" /></Ico>
        <Ico><path d="M4 5l2-4 3 2h2l3-2 2 4c3 5 3 14-6 14S1 10 4 5z" stroke="#e69ab5" strokeWidth="1.3" /><rect x="4" y="8" width="12" height="7" rx="2" fill="#f07818" /><path d="M7 9v3M13 9v3" stroke="#fff" strokeWidth="1.5" /><path d="M7 12h6l-3 4z" fill="#333" /></Ico>
      </div>
    </div>
  );
}

function StatusBar() {
  return (
    <footer className="relative flex h-[38px] shrink-0 items-center border-b-2 border-[#a9bccd] bg-[#2d5c87] pt-[3px] text-[13px] font-normal text-white">
      <div className="min-w-0 flex-1 pl-[6px]">对齐到 栅格</div>
      <div className="flex h-[28px] w-[842px] shrink-0 items-center">
        <div className="flex h-full items-center whitespace-pre border-x border-[#8ba6bf] px-[5px]">x=-21.0000  y=-3.0000</div>
        <button aria-label="消息" className="flex h-full items-center gap-[7px] border-r border-[#8ba6bf] px-[6px]">
          <svg width="16" height="14" viewBox="0 0 16 14"><path d="M8 0l8 14H0z" fill="#a9b9c9" /></svg>
          <svg width="8" height="4" viewBox="0 0 8 4"><path d="M4 0l4 4H0z" fill="#a9b9c9" /></svg>
        </button>
        <span className="ml-[136px] h-full w-px bg-[#5f84a6]" />
        <span className="ml-[208px] flex flex-col gap-2 text-[#7f99b3]">
          <Caret className="rotate-180 scale-150" />
          <Caret className="scale-150" />
        </span>
      </div>
      <ImeBar />
    </footer>
  );
}

function Recorder() {
  return (
    <div className="fixed bottom-[6px] right-[5px] flex h-[61px] w-[284px] items-center justify-between rounded-md bg-white pl-6 pr-[26px] font-['Open_Sans','Noto_Sans_CJK_SC',sans-serif] text-base font-normal">
      <p className="text-[#222]">07:49 / <span className="text-[#9a9a9a]">120:00</span></p>
      <button className="h-[36px] w-[95px] rounded bg-[#f94d2e] text-white">结束录制</button>
    </div>
  );
}

export default function App() {
  return (
    <div className="flex h-screen flex-col bg-white font-['Liberation_Sans','Noto_Sans_CJK_SC',sans-serif] font-light text-[#111]">
      <TitleBar />
      <Ribbon />
      <div className="flex min-h-0 flex-1">
        <Sidebar />
        <Viewport />
      </div>
      <StatusBar />
      <Recorder />
    </div>
  );
}
